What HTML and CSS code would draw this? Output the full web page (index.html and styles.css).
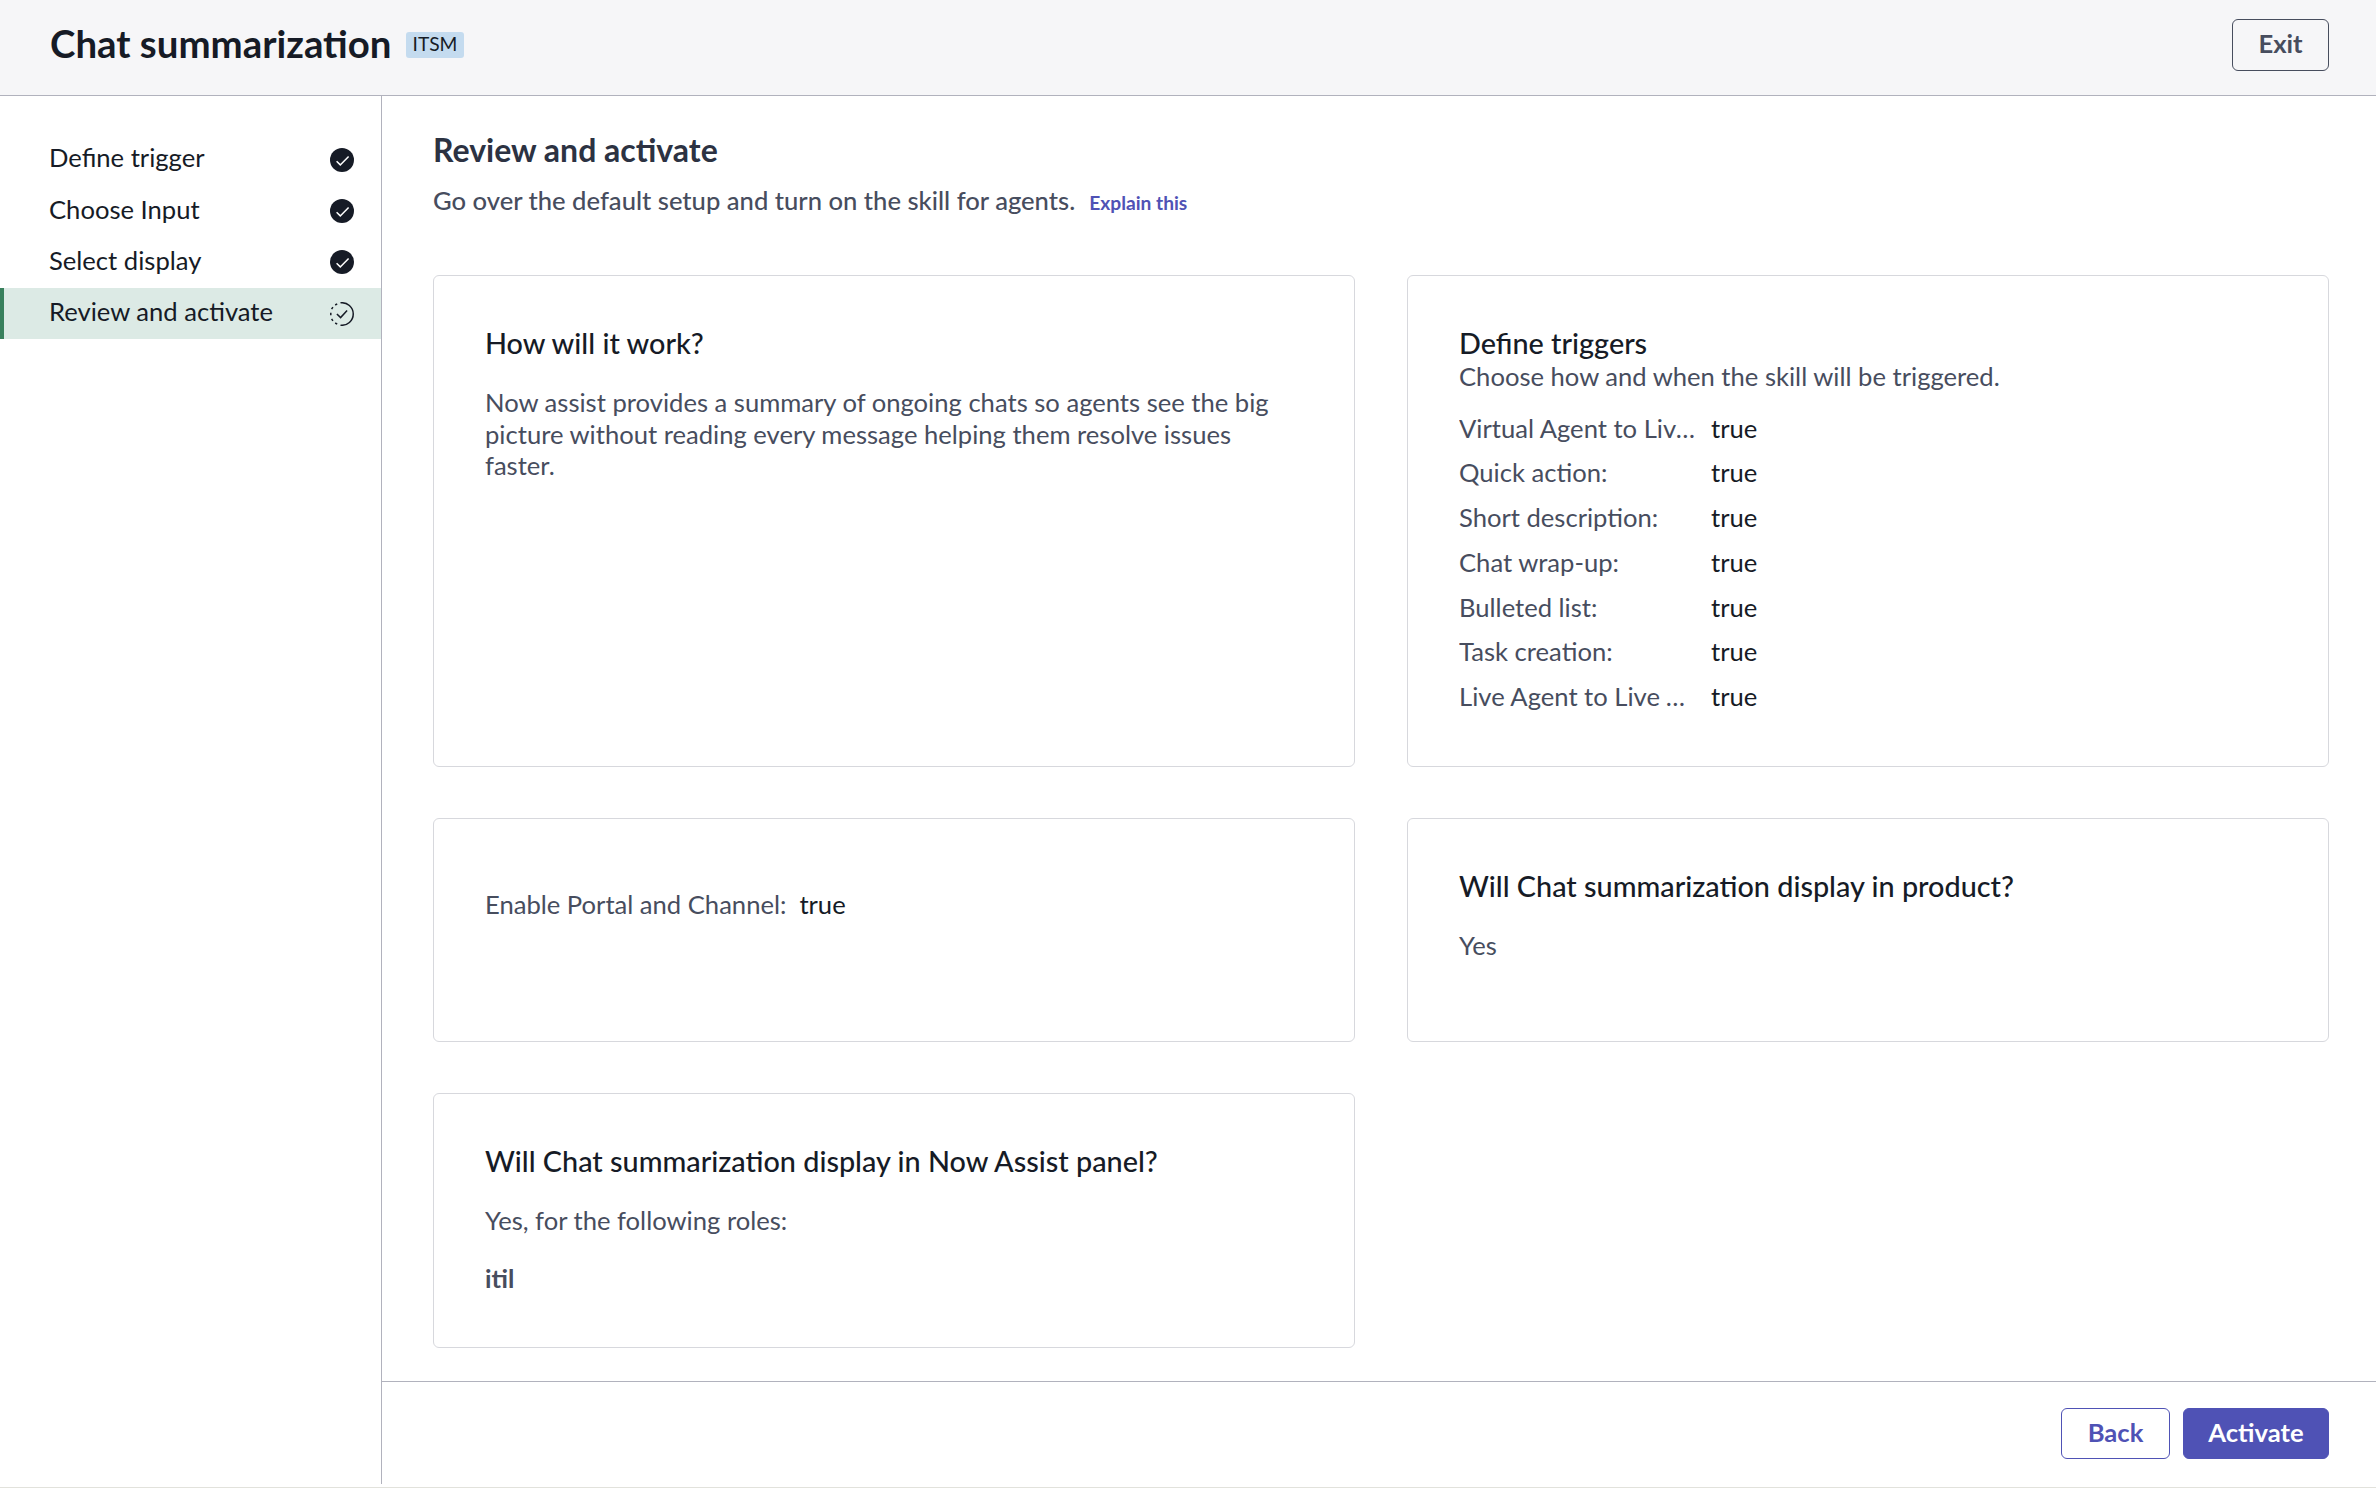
FILE: index.html
```html
<!DOCTYPE html>
<html lang="en">
<head>
<meta charset="utf-8">
<title>Chat summarization</title>
<link rel="stylesheet" href="styles.css">
</head>
<body>
<svg class="defs" aria-hidden="true">
  <symbol id="step-done" viewBox="0 0 24 24">
    <circle cx="12" cy="12" r="12" fill="#161b26"/>
    <path d="M6.6 13.2 10.3 16.9 18.6 8.4" fill="none" stroke="#fff" stroke-width="1.5"/>
  </symbol>
  <symbol id="step-current" viewBox="0 0 24 24">
    <path d="M10.5 .85A11.25 11.25 0 1 1 10.5 23.15" fill="none" stroke="#161b26" stroke-width="1.5"/>
    <path d="M7.2 1.8 5.2 3M2.9 5.2 1.6 7.2M.8 10.7V13.3M1.6 16.8 2.9 18.8M5.2 21 7.2 22.2" fill="none" stroke="#161b26" stroke-width="1.5"/>
    <path d="M6.9 12 10.6 15.6 17.1 8.6" fill="none" stroke="#161b26" stroke-width="1.5"/>
  </symbol>
</svg>
<div class="app">
  <header class="header">
    <h1 class="header-title">Chat summarization</h1>
    <span class="tag">ITSM</span>
    <button class="btn btn-exit">Exit</button>
  </header>
  <div class="body">
    <nav class="steps">
      <a class="step"><span class="step-label">Define trigger</span><svg class="step-icon"><use href="#step-done"/></svg></a>
      <a class="step"><span class="step-label">Choose Input</span><svg class="step-icon"><use href="#step-done"/></svg></a>
      <a class="step"><span class="step-label">Select display</span><svg class="step-icon"><use href="#step-done"/></svg></a>
      <a class="step step-active"><span class="step-label">Review and activate</span><svg class="step-icon"><use href="#step-current"/></svg></a>
    </nav>
    <main class="main">
      <section class="content">
        <h2 class="page-title">Review and activate</h2>
        <p class="page-intro"><span>Go over the default setup and turn on the skill for agents.</span><a class="explain">Explain this</a></p>
        <div class="cards">
          <article class="card">
            <h3 class="card-title">How will it work?</h3>
            <p class="card-text">Now assist provides a summary of ongoing chats so agents see the big picture without reading every message helping them resolve issues faster.</p>
          </article>
          <article class="card">
            <h3 class="card-title">Define triggers</h3>
            <p class="card-subtitle">Choose how and when the skill will be triggered.</p>
            <dl class="props">
              <div class="prop"><dt>Virtual Agent to Live Agent:</dt><dd>true</dd></div>
              <div class="prop"><dt>Quick action:</dt><dd>true</dd></div>
              <div class="prop"><dt>Short description:</dt><dd>true</dd></div>
              <div class="prop"><dt>Chat wrap-up:</dt><dd>true</dd></div>
              <div class="prop"><dt>Bulleted list:</dt><dd>true</dd></div>
              <div class="prop"><dt>Task creation:</dt><dd>true</dd></div>
              <div class="prop"><dt>Live Agent to Live Agent:</dt><dd>true</dd></div>
            </dl>
          </article>
          <article class="card">
            <dl class="props props-auto">
              <div class="prop"><dt>Enable Portal and Channel:</dt><dd>true</dd></div>
            </dl>
          </article>
          <article class="card">
            <h3 class="card-title">Will Chat summarization display in product?</h3>
            <p class="card-text">Yes</p>
          </article>
          <article class="card">
            <h3 class="card-title">Will Chat summarization display in Now Assist panel?</h3>
            <p class="card-text">Yes, for the following roles:</p>
            <p class="card-role">itil</p>
          </article>
        </div>
      </section>
      <footer class="footer">
        <button class="btn btn-back">Back</button>
        <button class="btn btn-activate">Activate</button>
      </footer>
    </main>
  </div>
</div>
</body>
</html>
```
FILE: styles.css
```css
* { box-sizing: border-box; }
body { margin: 0; font-family: Lato, "Liberation Sans", sans-serif; font-size: 25.6px; line-height: 31.4px; color: #161b26; background: #fff; }
h1, h2, h3, p, dl, dd { margin: 0; }
.defs { display: none; }

.app { display: flex; flex-direction: column; height: 1488px; padding-bottom: 3px; border-bottom: 1px solid #e2e2dc; }

.header { display: flex; align-items: flex-start; height: 96px; padding: 19px 47px 0 50px; background: #f6f6f8; border-bottom: 1px solid #b1b2bd; }
.header-title { font-size: 38.4px; line-height: 48px; font-weight: 700; }
.tag { height: 26px; margin: 13px 0 0 14px; padding: 0 7px; border-radius: 3px; background: #c4dbef; font-size: 19.2px; line-height: 24px; }

.btn { height: 51px; padding: 0 0 3px; border: 1px solid; border-radius: 6px; background: #fff; font: 700 25.6px/31px Lato, "Liberation Sans", sans-serif; }
.btn-exit { width: 97px; height: 52px; margin-left: auto; background: transparent; color: #474d5e; }
.btn-back { width: 109px; color: #4f52b5; }
.btn-activate { width: 146px; border-color: #4f52b5; background: #4f52b5; color: #fff; }

.body { display: flex; flex: 1; min-height: 0; }
.steps { width: 382px; padding-top: 38px; border-right: 1px solid #b1b2bd; }
.step { display: flex; align-items: center; justify-content: space-between; height: 51.33px; padding: 0 27px 0 49px; }
.step-label { padding-bottom: 3px; }
.step-icon { width: 24px; height: 24px; }
.step-active { padding-left: 45px; border-left: 4px solid #38805c; background: #dceae5; }

.main { display: flex; flex: 1; flex-direction: column; }
.content { flex: 1; padding: 34px 47px 0 51px; }
.page-title { font-size: 32px; line-height: 39px; color: #2c3242; }
.page-intro { display: flex; align-items: baseline; gap: 14px; margin-top: 16px; font-weight: 500; color: #474d5e; }
.explain { font-size: 19.2px; font-weight: 700; color: #4f52b5; }

.cards { display: grid; grid-template-columns: 922px 922px; grid-template-rows: 492px 224px 255px; gap: 51px 52px; margin-top: 57px; }
.card { padding: 50px 51px; border: 1px solid #d7d8dd; border-radius: 6px; }
.card-title { font-size: 28.8px; line-height: 35px; font-weight: 500; }
.card-text { margin-top: 26px; color: #474d5e; }
.card-subtitle { color: #474d5e; }
.card-role { margin-top: 26px; font-weight: 700; color: #474d5e; }
.props { margin-top: 13px; }
.prop { display: flex; align-items: center; gap: 13px; height: 44.8px; }
.prop dt { width: 239px; overflow: hidden; text-overflow: ellipsis; white-space: nowrap; color: #474d5e; }
.props-auto dt { width: auto; }

.footer { display: flex; justify-content: flex-end; gap: 13px; height: 103px; padding: 26px 47px 0 0; border-top: 1px solid #b1b2bd; }
```
